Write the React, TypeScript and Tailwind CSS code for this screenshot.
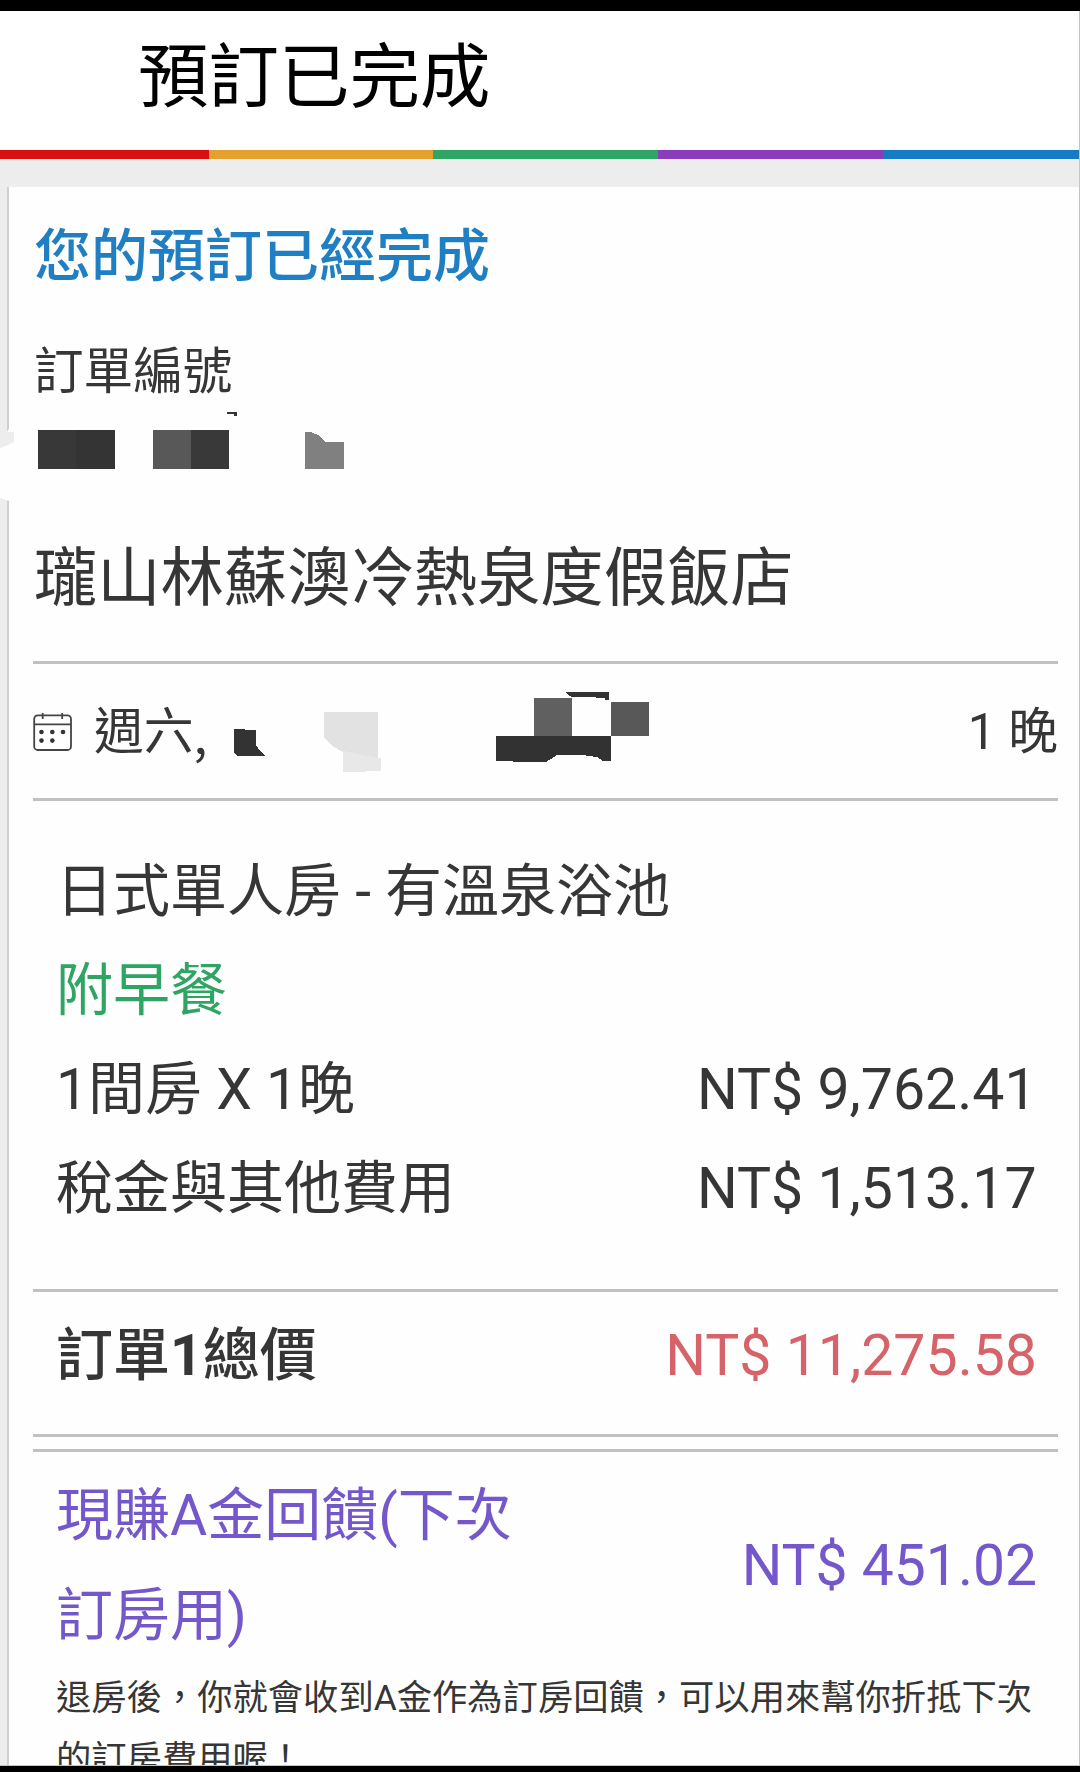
import type { ReactNode } from "react";

const stripes = [
  "w-[209px] bg-[#d91011]",
  "w-[224px] bg-[#e5a02f]",
  "w-[225px] bg-[#2ea562]",
  "w-[225px] bg-[#8b3cbb]",
  "flex-1 bg-[#147cc5]",
];

function Rule({ className = "" }: { className?: string }) {
  return <div className={`h-[3px] shrink-0 bg-[#c0c2c2] ${className}`} />;
}

function PriceRow({ label, amount }: { label: ReactNode; amount?: string }) {
  return (
    <div className="flex h-[99px] items-center justify-between">
      <span>{label}</span>
      {amount && <Amount>{amount}</Amount>}
    </div>
  );
}

function Amount({ children }: { children: string }) {
  return <span className="w-[340px] text-[57.2px] whitespace-nowrap">{children}</span>;
}

function CalendarIcon() {
  return (
    <svg className="h-[40px] w-[40px] shrink-0" viewBox="0 0 40 40" fill="none" stroke="#444" strokeWidth="1.8">
      <rect x="1.2" y="3.4" width="36.8" height="34.6" rx="3.5" />
      <path d="M1.2 12.4H38M9.7 1v6M29.2 1v6" />
      <g fill="#333" stroke="none">
        <circle cx="8.5" cy="20" r="2.3" />
        <circle cx="19.3" cy="20" r="2.3" />
        <circle cx="30" cy="20" r="2.3" />
        <circle cx="8.5" cy="28.6" r="2.3" />
        <circle cx="19.3" cy="28.6" r="2.3" />
      </g>
    </svg>
  );
}

/* Mosaic covering the booking number */
function NumberMosaic() {
  return (
    <svg className="-ml-[33px] block h-[79px] w-[400px]" viewBox="0 401 400 79" shapeRendering="crispEdges">
      <path d="M38 430H76V469H38Z" fill="#383838" />
      <path d="M76 430H115V469H76Z" fill="#343434" />
      <path d="M153 430H191V469H153Z" fill="#585858" />
      <path d="M191 430H229V469H191Z" fill="#393939" />
      <path d="M227 412H237V416H234V414H227Z" fill="#333" />
      <path d="M305 432H311L318 435L326 442H344V469H305Z" fill="#808080" />
    </svg>
  );
}

/* Mosaic covering the stay dates */
function DateMosaic() {
  return (
    <svg className="absolute top-0 left-[200px] h-[134px] w-[480px]" viewBox="233 664 480 134" shapeRendering="crispEdges">
      <path d="M234 729H245V730H256V745L260 751L265 755V756H237L234 753Z" fill="#333" />
      <path d="M324 712H378V758L343 752L332 746L324 738Z" fill="#e2e2e2" />
      <path d="M343 751L378 758H381V771H366V772H343Z" fill="#e8e8e8" />
      <path d="M565 692H609V700H605V698H596V697H572L568 695Z" fill="#333" />
      <path d="M534 697.5H572V736H534Z" fill="#606060" />
      <path d="M611 701.5H649V736H611Z" fill="#585858" />
      <path d="M496 736H611V761H603L597 757L582 755H557L551 759L546 762H513V761H496Z" fill="#323232" />
    </svg>
  );
}

export default function App() {
  return (
    <div className="flex h-[1772px] w-[1080px] flex-col overflow-hidden bg-black font-['Roboto','Noto_Sans_CJK_TC',sans-serif] text-[#363636]">
      <div className="mt-[11px] flex h-[1755px] shrink-0 flex-col overflow-hidden border-r border-b border-[#c4c4c4] bg-[#ededed]">
        <header className="flex h-[139px] shrink-0 items-center bg-white pb-[5px] pl-[138px]">
          <h1 className="text-[70.5px] leading-[80px] text-black">預訂已完成</h1>
        </header>
        <div className="flex h-[9px] shrink-0">
          {stripes.map((s) => (
            <div key={s} className={s} />
          ))}
        </div>

        <main className="relative mt-[28px] ml-[7px] flex flex-1 flex-col border-l-2 border-[#cfcfcf] bg-[#fefefe] pr-[21px] pl-[24px]">
          {/* Eraser stroke across the card's left edge */}
          <svg className="absolute top-[240px] -left-[9px] h-[76px] w-[20px]" viewBox="0 427 20 76">
            <path d="M0 448L14 442V432H7L10 427H20V503L9 501L0 498Z" fill="#fefefe" />
            <path d="M0 432H14V442L0 448Z" fill="#ededed" />
          </svg>

          <h2 className="mt-[30px] h-[80px] pl-px text-[57px] leading-[80px] font-medium text-[#1f7fc2]">您的預訂已經完成</h2>
          <p className="mt-[45px] h-[59px] pl-px text-[49.6px] leading-[60px]">訂單編號</p>
          <NumberMosaic />
          <h3 className="mt-[58px] h-[80px] pl-px text-[63.3px] leading-[80px] whitespace-nowrap">瓏山林蘇澳冷熱泉度假飯店</h3>

          <Rule className="mt-[43px]" />
          <div className="relative flex h-[134px] items-center pt-[2px] text-[49.8px] leading-[60px]">
            <CalendarIcon />
            <span className="ml-[21px] flex h-[60px]">
              週六<span className="font-['Noto_Sans_CJK_TC']">,</span>
            </span>
            <DateMosaic />
            <span className="ml-auto h-[60px]">1 晚</span>
          </div>
          <Rule />

          <section className="mt-[41px] pr-[21px] pl-[23px] text-[57px] leading-[99px]">
            <PriceRow label="日式單人房 - 有溫泉浴池" />
            <PriceRow label={<span className="text-[#2ea562]">附早餐</span>} />
            <PriceRow label="1間房 X 1晚" amount="NT$ 9,762.41" />
            <PriceRow label="稅金與其他費用" amount="NT$ 1,513.17" />
          </section>

          <Rule className="mt-[51px]" />
          <div className="flex h-[142px] items-center justify-between pr-[21px] pb-[15px] pl-[23px] text-[57px] leading-[99px]">
            <span className="font-medium">
              訂單<span className="font-bold">1</span>總價
            </span>
            <span className="text-[57.2px] text-[#d6636a]">NT$ 11,275.58</span>
          </div>
          <Rule />
          <Rule className="mt-[12px]" />

          <section className="mt-[14px] pr-[21px] pl-[23px]">
            <div className="flex items-center justify-between text-[57px] leading-[100px] text-[#7458cb]">
              <p>
                現賺A金回饋(下次
                <br />
                訂房用)
              </p>
              <span>NT$ 451.02</span>
            </div>
            <p className="pt-[2px] text-[35.3px] leading-[61px] whitespace-nowrap">
              退房後，你就會收到A金作為訂房回饋，可以用來幫你折抵下次
              <br />
              的訂房費用喔！
            </p>
          </section>
        </main>
      </div>
    </div>
  );
}
